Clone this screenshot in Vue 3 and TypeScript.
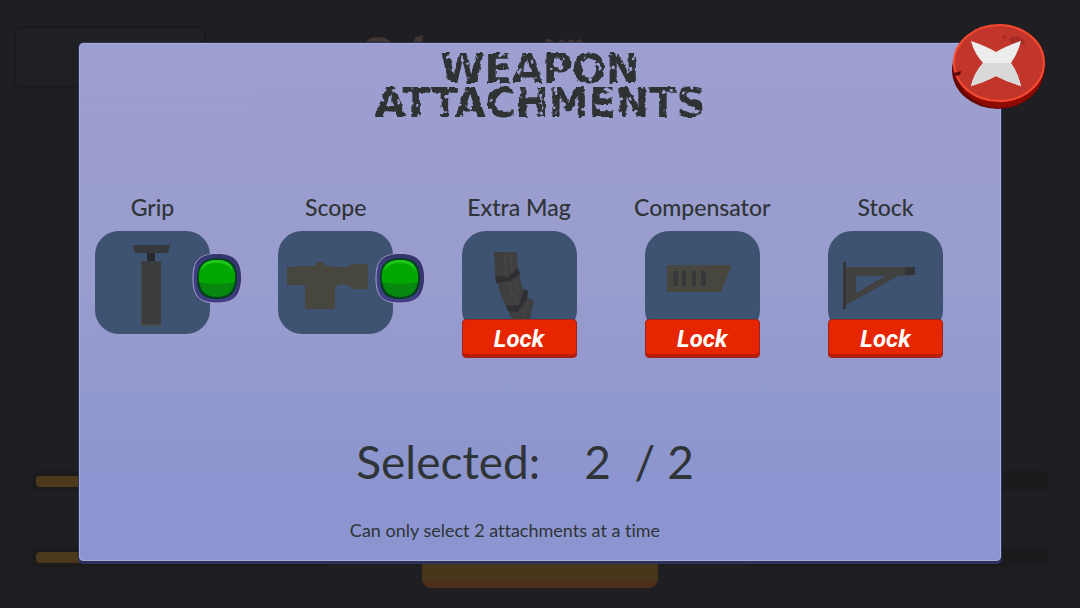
<script setup lang="ts">
import { computed, ref } from 'vue'

type Kind = 'grip' | 'scope' | 'mag' | 'compensator' | 'stock'

interface Attachment {
  kind: Kind
  name: string
  locked: boolean
  selected: boolean
}

const limit = 2
const open = ref(true)

const attachments = ref<Attachment[]>([
  { kind: 'grip', name: 'Grip', locked: false, selected: true },
  { kind: 'scope', name: 'Scope', locked: false, selected: true },
  { kind: 'mag', name: 'Extra Mag', locked: true, selected: false },
  { kind: 'compensator', name: 'Compensator', locked: true, selected: false },
  { kind: 'stock', name: 'Stock', locked: true, selected: false },
])

const selectedCount = computed(() => attachments.value.filter((a) => a.selected).length)

function toggle(item: Attachment) {
  if (item.selected || selectedCount.value < limit) item.selected = !item.selected
}
</script>

<template>
  <main class="screen">
    <svg class="scene" viewBox="0 0 1080 608" preserveAspectRatio="none" aria-hidden="true">
      <rect x="15" y="27" width="190" height="60" rx="5" fill="#1f2023" stroke="#1b1b1e" stroke-width="2" />
      <path d="M366 43q2-6 12-6t13 6zM413 43l3-6 7-2-1 8zM545 43l1-4 6 1 2 3zM558 43l3-4 5 3 5-3 4 3 5-3 4 4z" fill="#413636" />
      <g fill="#1b1a1d">
        <rect x="31" y="471" width="80" height="20" rx="6" />
        <rect x="31" y="547" width="300" height="20" rx="6" />
        <rect x="748" y="547" width="301" height="20" rx="6" />
        <rect x="940" y="471" width="109" height="20" rx="6" />
      </g>
      <g fill="#4c381b">
        <rect x="36" y="476" width="60" height="11" rx="4" />
        <rect x="36" y="552" width="60" height="11" rx="4" />
      </g>
      <rect x="422" y="545" width="236" height="43" rx="9" fill="#4b2f1a" />
      <path d="M422 545h236v35q-2 2-6 2H428q-4 0-6-2z" fill="#48361a" />
    </svg>

    <section v-if="open" class="panel" role="dialog" aria-labelledby="panel-title">
      <button class="close" type="button" aria-label="Close" @click="open = false">
        <svg viewBox="0 0 96 86" width="96" height="86" aria-hidden="true">
          <ellipse cx="50" cy="41" rx="45" ry="40" fill="#35140f" />
          <ellipse cx="47" cy="46" rx="46" ry="39" fill="#650705" />
          <ellipse cx="49" cy="44" rx="44" ry="40" fill="#8d0a05" />
          <ellipse cx="48" cy="39" rx="45" ry="38" fill="#c1352b" stroke="#f44a30" stroke-width="2" />
          <path d="M58 15q4-5 12-1 5 4 4 6-3 2-7 0-8 1-9-5z" fill="#a52c23" />
          <path d="M51 12l4-1 1 3-3 1z" fill="#a52c23" />
          <path d="M3 49l7-2-1 4-6 1z" fill="#5b0907" />
          <path d="M20 17q15 5 25 11 10-6 25-11-3 12-10 22 7 10 10 23-14-4-25-10-11 6-25 10 3-13 12-23-9-10-12-22z" fill="#ececec" />
          <path d="M32 39h28q7 10 10 23-14-4-25-10-11 6-25 10 3-13 12-23z" fill="#d9d9d9" />
        </svg>
      </button>

      <h1 id="panel-title" class="title">WEAPON<br />ATTACHMENTS</h1>
      <svg class="filters" width="0" height="0" aria-hidden="true">
        <filter id="worn" x="-5%" y="-10%" width="110%" height="120%">
          <feTurbulence type="fractalNoise" baseFrequency="0.14" numOctaves="2" seed="7" result="noise" />
          <feDisplacementMap in="SourceGraphic" in2="noise" scale="4" xChannelSelector="R" yChannelSelector="G" result="rough" />
          <feColorMatrix in="noise" type="matrix" values="0 0 0 0 0  0 0 0 0 0  0 0 0 0 0  0 0 -14 0 10" result="mask" />
          <feComposite in="rough" in2="mask" operator="in" />
        </filter>
      </svg>

      <ul class="cards">
        <li v-for="item in attachments" :key="item.kind" class="slot">
          <h2 class="name">{{ item.name }}</h2>
          <div class="card">
            <svg class="art" viewBox="0 0 115 103" aria-hidden="true">
              <g v-if="item.kind === 'grip'">
                <path d="M38 14h37l-2 8H40z" fill="#37383b" />
                <path d="M52 22h8v8h-8z" fill="#26292f" />
                <path d="M46 30h20v65H46z" fill="#3b3c3e" />
                <path d="M46 93h20v2H46zM46 30h1v65h-1z" fill="#484844" />
              </g>
              <path
                v-else-if="item.kind === 'scope'"
                d="M9 36h9v-1h19l2-4h6l2 3 10 2h13l3-3h17v25H74l-4-4-8-1-5 3v22H27V54H9z"
                fill="#47473f"
              />
              <g v-else-if="item.kind === 'mag'">
                <path d="M32 21h23l1 16 4 19 3 9 9 5-4 18H50L38 62l-5-20z" fill="#3e3f3e" />
                <path d="M43 24l1 21 6 17 7 14M49 24l1 18 6 18M66 70l-5 16M62 68l-6 15" fill="none" stroke="#4a4b48" />
                <path d="M33 45l13 1 10-9 2 6-10 7-14 2zM44 75l13-1 5-16 4 2-1 8-9 13-10-1z" fill="#2d2f33" />
              </g>
              <g v-else-if="item.kind === 'compensator'">
                <path d="M22 34h65L76 61H22z" fill="#47473f" />
                <path d="M28 40h5v15h-5zM37 40h4v15h-4zM47 40h4v15h-4zM56 40h5v15h-5z" fill="#36383a" />
              </g>
              <g v-else>
                <path fill-rule="evenodd" d="M18 36h69v8l-17 1-52 29zM28 45v17l29-17z" fill="#41413f" />
                <path d="M15 31h3v47h-3zM77 36h10v8H77z" fill="#343537" />
              </g>
            </svg>
            <button
              v-if="!item.locked"
              class="toggle"
              type="button"
              :aria-pressed="item.selected"
              :aria-label="'Select ' + item.name"
              @click="toggle(item)"
            >
              <svg viewBox="0 0 50 51" width="50" height="51" aria-hidden="true">
                <path d="M25 1c18 0 24 7 24 24S43 50 25 50 1 43 1 25 8 1 25 1z" fill="#403f86" stroke="#aaa0cf" />
                <path d="M25 1c16 0 24 6 24 24 0 8-2 15-7 19 2-5 3-11 3-19C45 10 39 5 25 5S8 8 3 14C6 4 14 1 25 1z" fill="#35366f" />
                <path d="M25 5c15 0 20 7 20 20s-5 21-20 21S5 39 5 25 11 5 25 5z" :fill="item.selected ? '#073f22' : '#22233f'" />
                <path d="M25 7c13 0 18 7 18 18s-5 19-18 19S7 36 7 25 12 7 25 7z" :fill="item.selected ? '#05880d' : '#3f4364'" />
                <path d="M7 29C5 13 12 7 25 7s19 6 18 22q-18 4-36 0z" :fill="item.selected ? '#02a800' : '#4d5275'" />
                <path d="M9 18C11 9 17 7 25 7s14 2 16 11C36 12 33 10 25 10S13 12 9 18z" :fill="item.selected ? '#1fc51b' : '#666b90'" />
              </svg>
            </button>
            <button v-else class="lock" type="button" :aria-label="'Lock ' + item.name">Lock</button>
          </div>
        </li>
      </ul>

      <p class="count"><span>Selected:</span><span>{{ selectedCount }}&nbsp; / {{ limit }}</span></p>
      <p class="hint">Can only select 2 attachments at a time</p>
    </section>
  </main>
</template>

<style>
body {
  margin: 0;
  background: #1f1e23;
}
</style>

<style scoped>
.screen {
  position: relative;
  box-sizing: border-box;
  display: flex;
  min-height: 100vh;
  padding: 43px 79px 47px;
  background: #1f1e23;
  color: #2f3437;
  font-family: Lato, "Open Sans", sans-serif;
  font-variant-ligatures: none;
}

.scene {
  position: absolute;
  inset: 0;
  width: 100%;
  height: 100%;
}

.panel {
  position: relative;
  box-sizing: border-box;
  flex: 1;
  display: flex;
  flex-direction: column;
  padding: 8px 57px 16px 15px;
  border: 1px solid #a9addb;
  border-radius: 4px;
  background: linear-gradient(#9c9fd0, #999dce 45%, #8c95cf 85%);
  box-shadow: 0 0 0 1px #2c3350, 0 2px 0 1px #2c3360;
}

.close {
  position: absolute;
  top: -20px;
  right: -47px;
  padding: 0;
  border: 0;
  background: none;
  cursor: pointer;
}

.close svg,
.toggle svg,
.art {
  display: block;
}

.title {
  margin: 0 -42px 0 0;
  color: #2d3133;
  font: bold 40px/34px "DejaVu Sans", sans-serif;
  text-align: center;
  filter: url(#worn);
}

.filters {
  position: absolute;
}

.cards {
  display: flex;
  justify-content: space-between;
  margin: 72px 0 0;
  padding: 0;
  list-style: none;
}

.slot {
  display: flex;
  flex-direction: column;
  align-items: center;
  width: 115px;
}

.name {
  margin: 0 0 8px;
  font-size: 23px;
  font-weight: 500;
  line-height: 31px;
  white-space: nowrap;
}

.card {
  position: relative;
  width: 100%;
  border-radius: 24px;
  background: #3e5271;
}

.toggle {
  position: absolute;
  top: 22px;
  right: -32px;
  padding: 0;
  border: 0;
  background: none;
  cursor: pointer;
}

.lock {
  position: absolute;
  top: 88px;
  left: 0;
  width: 100%;
  height: 39px;
  padding: 2px 0 0;
  border: 1px solid #9c2320;
  border-radius: 4px;
  background: #e62600;
  box-shadow: inset 0 -3px 0 #b81d08;
  color: #fff;
  font: italic bold 24px/35px Roboto, "Open Sans", sans-serif;
  text-align: center;
}

.count {
  display: flex;
  justify-content: center;
  gap: 44px;
  margin: auto 0 0;
  padding-left: 12px;
  font-size: 46px;
  line-height: 60px;
}

.hint {
  margin: 24px 0 0;
  padding-right: 28px;
  font-size: 18px;
  line-height: 28px;
  text-align: center;
}
</style>
